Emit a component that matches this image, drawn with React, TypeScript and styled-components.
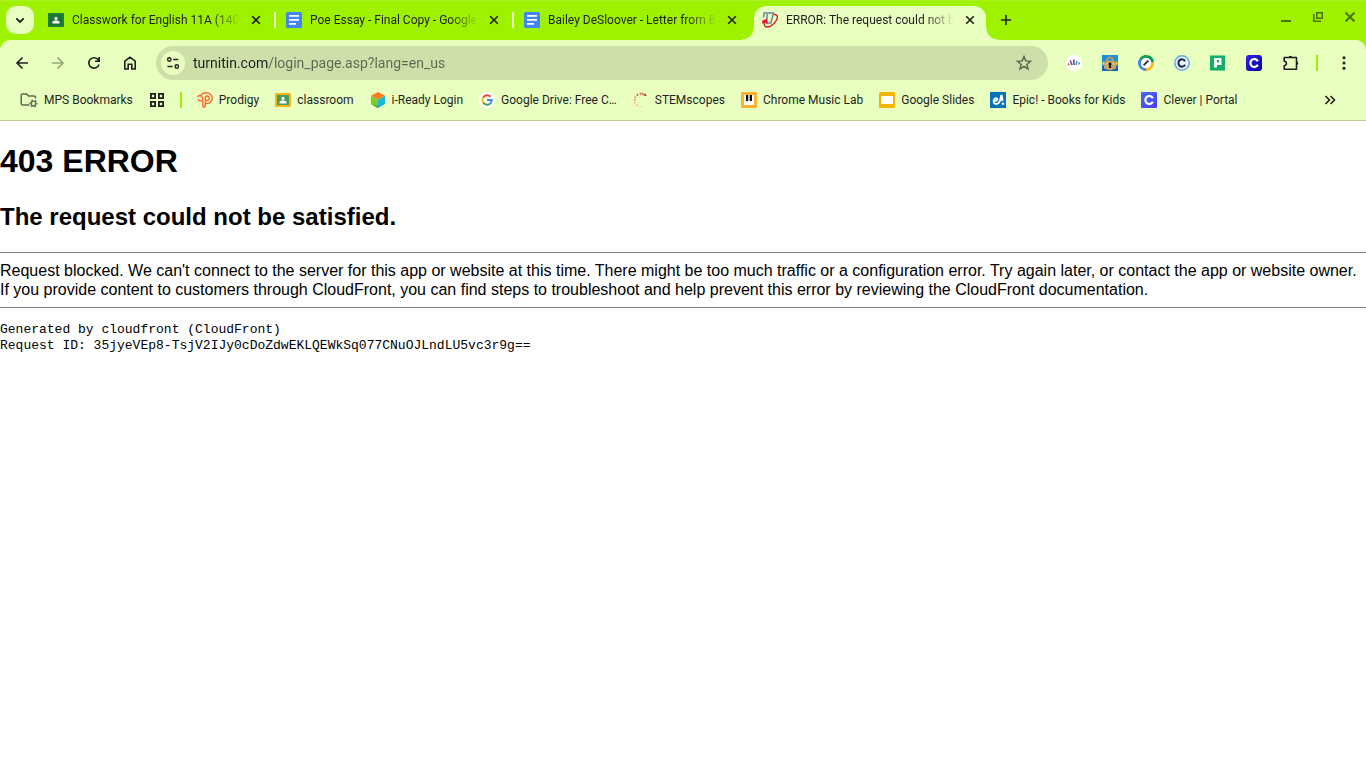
import React from "react";
import styled, { createGlobalStyle, css } from "styled-components";

const c = {
  frame: "#9ef200",
  toolbar: "#e8ffbf",
  field: "#cfdfaa",
  ink: "#1f1f1f",
  muted: "#5f6753",
  control: "#4c7500",
};

const GlobalStyle = createGlobalStyle`
  * { box-sizing: border-box; }
  body { margin: 0; background: #fff; color: #000; font-family: "Liberation Sans", Arial, sans-serif; }
  button, input { font: inherit; }
`;

const Chrome = styled.header`
  background: ${c.frame};
  font-family: Roboto, sans-serif;
  font-size: 12px;
  color: ${c.ink};
`;

const TabStrip = styled.div`
  display: flex;
  align-items: flex-start;
  height: 40px;
  padding: 6px 0 0 6px;
  box-shadow: inset 0 1px 0 #aaf228;
`;

const iconButton = css`
  display: grid;
  place-items: center;
  flex: none;
  padding: 0;
  border: 0;
  background: none;
  color: ${c.ink};
`;

const TabSearch = styled.button`
  ${iconButton}
  width: 28px;
  height: 28px;
  margin-right: 6px;
  border-radius: 10px;
  background: ${c.toolbar};
`;

const Tabs = styled.div`
  display: flex;
  flex: 0 1 946px;
  min-width: 0;
`;

const Tab = styled.div<{ $active?: boolean }>`
  position: relative;
  display: flex;
  align-items: center;
  flex: 0 1 232px;
  min-width: 0;
  height: ${(p) => (p.$active ? 34 : 28)}px;
  padding: ${(p) => (p.$active ? "0 8px 6px" : "0 8px")};
  border-radius: 12px 12px 0 0;
  background: ${(p) => (p.$active ? c.toolbar : "transparent")};
  ${(p) =>
    p.$active &&
    css`
      &::before,
      &::after {
        content: "";
        position: absolute;
        bottom: 0;
        width: 12px;
        height: 12px;
      }
      &::before {
        right: 100%;
        background: radial-gradient(circle at 0 0, transparent 11px, ${c.toolbar} 12px);
      }
      &::after {
        left: 100%;
        background: radial-gradient(circle at 100% 0, transparent 11px, ${c.toolbar} 12px);
      }
    `}
`;

const TabGap = styled.span<{ $line?: boolean }>`
  flex: none;
  width: 2px;
  height: 16px;
  margin: 6px 2px;
  border-radius: 1px;
  background: ${(p) => (p.$line ? c.toolbar : "transparent")};
`;

const TabTitle = styled.button`
  flex: 1;
  min-width: 0;
  height: 28px;
  margin: 0 8px;
  padding: 0;
  border: 0;
  background: none;
  color: ${c.ink};
  text-align: left;
  white-space: nowrap;
  overflow: hidden;
  mask-image: linear-gradient(to right, #000 calc(100% - 28px), transparent);
`;

const TabClose = styled.button`
  ${iconButton}
  width: 16px;
  height: 16px;
`;

const NewTab = styled.button`
  ${iconButton}
  width: 28px;
  height: 28px;
  margin-left: 6px;
`;

const WindowControls = styled.div`
  display: flex;
  margin-left: auto;
`;

const WindowButton = styled.button`
  ${iconButton}
  width: 32px;
  height: 22px;
  color: ${c.control};
`;

const Panel = styled.div`
  background: ${c.toolbar};
  border-radius: 10px 10px 0 0;
  border-bottom: 1px solid #b9cc99;
`;

const Toolbar = styled.div`
  display: flex;
  align-items: center;
  gap: 8px;
  padding: 6px 8px 0;
`;

const ToolButton = styled.button<{ $dim?: boolean }>`
  ${iconButton}
  width: 28px;
  height: 28px;
  opacity: ${(p) => (p.$dim ? 0.4 : 1)};
`;

const AddressBar = styled.form`
  display: flex;
  align-items: center;
  flex: 1;
  min-width: 0;
  height: 34px;
  margin: 0 4px;
  padding: 0 10px 0 5px;
  border-radius: 17px;
  background: ${c.field};
`;

const SiteInfo = styled.button`
  ${iconButton}
  width: 24px;
  height: 24px;
  border-radius: 50%;
  background: ${c.toolbar};
`;

const AddressInput = styled.input`
  flex: 1;
  min-width: 0;
  height: 34px;
  margin: 0 8px;
  padding: 0;
  border: 0;
  outline: 0;
  font-size: 14px;
  color: transparent;
  background: linear-gradient(to right, ${c.ink} 76px, ${c.muted} 76px);
  background-clip: text;
  -webkit-background-clip: text;
`;

const ToolDivider = styled.span`
  flex: none;
  width: 2px;
  height: 16px;
  margin: 0 4px;
  background: ${c.frame};
`;

const Bookmarks = styled.nav`
  display: flex;
  align-items: center;
  gap: 16px;
  height: 40px;
  padding: 0 28px 0 20px;
`;

const Bookmark = styled.a`
  display: flex;
  align-items: center;
  flex: none;
  gap: 6px;
  color: ${c.ink};
  text-decoration: none;
  white-space: nowrap;
`;

const BookmarkDivider = styled.span`
  flex: none;
  width: 2px;
  height: 16px;
  margin: 0 -1px;
  background: ${c.frame};
`;

const Overflow = styled.button`
  ${iconButton}
  width: 16px;
  height: 16px;
  margin-left: auto;
`;

const Svg = styled.svg`
  display: block;
  flex: none;
`;

const Page = styled.main`
  overflow: hidden;
`;

const Title = styled.h1`
  margin: 22px 0 23px;
  font-size: 32px;
  line-height: 37px;
`;

const Subtitle = styled.h2`
  margin: 0 0 21px;
  font-size: 24px;
  line-height: 28px;
`;

const Rule = styled.hr`
  height: 1px;
  margin: 0;
  border: 0;
  background: #808080;
`;

const Message = styled.p`
  margin: 8px 0;
  font-size: 16px;
  line-height: 19px;
`;

const Details = styled.pre`
  margin: 14px 0;
  font-family: "Liberation Mono", monospace;
  font-size: 13px;
  line-height: 16px;
`;

type IconProps = { size?: number; box?: number; children: React.ReactNode };

const Icon = ({ size = 16, box = 16, children }: IconProps) => (
  <Svg width={size} height={size} viewBox={`0 0 ${box} ${box}`} aria-hidden="true" fill="none">
    {children}
  </Svg>
);

const line = { stroke: "currentColor", strokeWidth: 1.6 };

const CloseIcon = () => (
  <Icon><path d="M4.2 4.2l7.6 7.6M11.8 4.2l-7.6 7.6" {...line} /></Icon>
);

const DocsIcon = () => (
  <Icon>
    <rect width="16" height="16" rx="1.5" fill="#4285f4" />
    <path d="M3 3.900h10M3 7.900h10M3 11.900h7" stroke="#fff" strokeWidth="1.800" />
  </Icon>
);

const ClassroomIcon = ({ frame, board }: { frame: string; board: string }) => (
  <Icon>
    <rect y="1" width="16" height="14" rx="1" fill={frame} />
    <rect x="2" y="3" width="12" height="10" fill={board} />
    <circle cx="8" cy="6.4" r="1.6" fill="#fff" />
    <path d="M4.500 11.500V10.200C4.500 9 6.500 8.500 8 8.500s3.500.5 3.500 1.700v1.300z" fill="#fff" />
  </Icon>
);

const TurnitinIcon = () => (
  <Icon>
    <path d="M1.500 5.500L2 1H11.500L8.800 11H4.500L5.200 2" stroke="#6488a0" strokeWidth="1.500" />
    <path d="M12 2.500C15.700 2.200 16.200 5 14.300 8.500C11.800 12.700 7 16 3.800 14.800C2 14 1.900 12 2.700 9.500" stroke="#e3182d" strokeWidth="1.400" />
    <path d="M0 8.800L4.800 6.800L5.800 12L3.200 10.800L0.500 11.800z" fill="#e3182d" />
  </Icon>
);

const tabs = [
  { title: "Classwork for English 11A (140", icon: <ClassroomIcon frame="#188038" board="#1e7536" /> },
  { title: "Poe Essay - Final Copy - Google", icon: <DocsIcon /> },
  { title: "Bailey DeSloover - Letter from B", icon: <DocsIcon /> },
  { title: "ERROR: The request could not b", icon: <TurnitinIcon />, active: true },
];

const FolderIcon = () => (
  <Icon size={18} box={18}>
    <path d="M9.500 14H2.800Q1.200 14 1.200 12.400V4.600Q1.200 3 2.800 3H6.500L8.500 5H14Q15.500 5 15.500 6.500V7.500" stroke="#5f6753" strokeWidth="1.500" />
    <circle cx="13.500" cy="12.500" r="2.400" stroke="#5f6753" strokeWidth="1.400" />
    <circle cx="13.500" cy="12.500" r="3.500" stroke="#5f6753" strokeWidth="1.300" strokeDasharray="1.500 2.165" strokeDashoffset=".7" />
  </Icon>
);

const GridIcon = () => (
  <Icon>
    <path d="M1.900 1.900h4.200v4.200H1.900zM9.900 1.900h4.200v4.200H9.900zM1.900 9.900h4.200v4.200H1.900zM9.900 9.900h4.200v4.200H9.900z" {...line} strokeWidth={1.800} />
  </Icon>
);

const ProdigyIcon = () => (
  <Icon>
    <path d="M.8 4.500C2.500 2.500 5.500 3.700 5.700 7V13.500Q5.700 15.200 7 15.200Q8.300 15.200 8.300 13.500V11.200C12 12.200 15.200 9.800 15.200 6.300C15.200 2.800 12.500.8 9.300.8C6.800.8 5.200 1.600 4.200 3M1.200 7.500C2 9.200 4 9.300 5.700 8.300M8.300 11V6.500C8.300 4.800 9 4 10.200 4C11.500 4 12.300 5 12.300 6.200C12.300 7.800 10.500 8.900 8.300 8.200" stroke="#f96a2f" strokeWidth="1.400" strokeLinecap="round" strokeLinejoin="round" />
  </Icon>
);

const IReadyIcon = () => (
  <Icon>
    <path d="M8 0L15 3.800L8 7.700L1 3.800z" fill="#ff7a1a" />
    <path d="M1 3.800L8 7.700V16L1 12z" fill="#7fc832" />
    <path d="M15 3.800L8 7.700V16L15 12z" fill="#16b9d0" />
    <path d="M1 12L8 16V14z" fill="#449d2b" />
  </Icon>
);

const GoogleIcon = () => (
  <Icon>
    <circle cx="8" cy="8" r="8" fill="#fff" />
    <path d="M4.300 5.300A4.700 4.700 0 0 1 11.400 4.700" stroke="#ea4335" strokeWidth="2" />
    <path d="M4.300 10.700A4.700 4.700 0 0 1 4.300 5.300" stroke="#fbbc04" strokeWidth="2" />
    <path d="M11 11.700A4.700 4.700 0 0 1 4.300 10.700" stroke="#34a853" strokeWidth="2" />
    <path d="M8 8H12.700Q12.700 10.400 11 11.700" stroke="#4285f4" strokeWidth="2" />
  </Icon>
);

const StemIcon = () => (
  <Icon>
    <path d="M9.300 14.300l.3 1M7 14l-.4 1" stroke="#fbc49c" strokeWidth="1.200" />
    <path d="M4.300 12.800l-.9 1M2.300 10.700l-1 .5" stroke="#f79a80" strokeWidth="1.500" />
    <path d="M1 7.800h1.500M1.600 4.900l1.200.6" stroke="#f06a68" strokeWidth="1.500" />
    <path d="M4 2.200l.8 1.200M7.500.8l.2 1.600M10.300 1.200l-.3 1.500" stroke="#dc3048" strokeWidth="1.800" />
    <path d="M12.300 1.200l1.500 3-3-.5z" fill="#c51f3c" />
  </Icon>
);

const MusicIcon = () => (
  <Icon>
    <rect width="16" height="16" rx="1" fill="#ffb02e" />
    <path d="M3 3h10v10H3z" fill="#fff" />
    <path d="M5 3h2.300v6H5zM8.700 3H11v6H8.700z" fill="#111" />
    <path d="M6.200 9v4M9.800 9v4" stroke="#ddd" strokeWidth=".6" />
  </Icon>
);

const SlidesIcon = () => (
  <Icon>
    <rect width="16" height="16" rx="1.500" fill="#f5b400" />
    <path d="M2 4h12v8H2z" fill="#fff" />
  </Icon>
);

const EpicIcon = () => (
  <Icon>
    <path d="M0 0h16v16H0z" fill="#0872bd" />
    <path d="M4 9C6.500 9 7.700 7.800 7.100 6.700C6 5.200 3.400 7 3.600 9.700C3.800 12.500 7 12.400 8.800 10.800C10 9.500 10.800 6 11.300 3" stroke="#fff" strokeWidth="1.900" />
    <path d="M11.400 3l1.100 6" stroke="#fff" strokeWidth="2" />
    <circle cx="12.900" cy="11.800" r="1.200" fill="#fff" />
  </Icon>
);

const CleverIcon = ({ dark }: { dark?: boolean }) => (
  <Icon>
    <defs>
      <linearGradient id={dark ? "cleverDark" : "cleverLight"} x1="0" y1="0" x2="1" y2="1">
        <stop stopColor={dark ? "#2b22f0" : "#4a6bf5"} />
        <stop offset="1" stopColor={dark ? "#0a0497" : "#4a3df0"} />
      </linearGradient>
    </defs>
    <rect width="16" height="16" rx={dark ? 3 : 1} fill={`url(#${dark ? "cleverDark" : "cleverLight"})`} />
    <path d="M11.800 6.300A3.900 4 0 1 0 11.800 9.700" stroke="#fff" strokeWidth="2.200" />
  </Icon>
);

const bookmarks = [
  { label: "Prodigy", icon: <ProdigyIcon /> },
  { label: "classroom", icon: <ClassroomIcon frame="#f3b814" board="#4a9a58" /> },
  { label: "i-Ready Login", icon: <IReadyIcon /> },
  { label: "Google Drive: Free C…", icon: <GoogleIcon /> },
  { label: "STEMscopes", icon: <StemIcon /> },
  { label: "Chrome Music Lab", icon: <MusicIcon /> },
  { label: "Google Slides", icon: <SlidesIcon /> },
  { label: "Epic! - Books for Kids", icon: <EpicIcon /> },
  { label: "Clever | Portal", icon: <CleverIcon /> },
];

const extensions = [
  {
    label: "Reading helper",
    icon: (
      <Icon>
        <circle cx="8" cy="8" r="8" fill="#fff" />
        <path d="M2 8.500l1.200 1.800" stroke="#ea4343" strokeWidth="1.400" />
        <path d="M4.200 5.500l1.800 4.500" stroke="#6a4c9c" strokeWidth="1.600" />
        <path d="M7.900 4.500v5.500" stroke="#7a4ea5" strokeWidth="1.700" />
        <path d="M10.800 5.800l-.6 4.200" stroke="#2f9c86" strokeWidth="1.400" />
        <path d="M13.500 7.200l-.8 2.300" stroke="#3a84c8" strokeWidth="1.300" />
      </Icon>
    ),
  },
  {
    label: "Lock",
    icon: (
      <Icon>
        <path d="M0 0h16v16H0z" fill="#1692dc" />
        <path d="M0 11h16v5H0z" fill="#1465b5" />
        <path d="M0 8l2-2v5zM16 8l-2-2v5z" fill="#f2c61e" />
        <path d="M5 7.500V5Q5 2.500 8 2.500t3 2.500v2.500" stroke="#ad9565" strokeWidth="1.800" />
        <path d="M2 7l2.500-1.500h7L14 7v6.500L8 15.500 2 13.500z" fill="#c2a46b" />
        <path d="M3.500 8h9v1.500h-9z" fill="#dec58c" />
        <path d="M8 7.500a1.600 1.600 0 0 1 .8 3L9.200 13H6.800l.4-2.500A1.600 1.600 0 0 1 8 7.500z" fill="#19150d" />
      </Icon>
    ),
  },
  {
    label: "Writing coach",
    icon: (
      <Icon>
        <circle cx="8" cy="8" r="5.500" fill="#fff" />
        <path d="M1.500 9.500A6.600 6.600 0 0 1 3.600 3.200" stroke="#4285f4" strokeWidth="2.800" />
        <path d="M2.800 4A6.600 6.600 0 0 1 14.600 7.500" stroke="#149e54" strokeWidth="2.800" />
        <path d="M14.600 7.500A6.600 6.600 0 0 1 7.500 14.600" stroke="#fbb917" strokeWidth="2.800" />
        <path d="M8 14.600A6.600 6.600 0 0 1 1.500 9" stroke="#4285f4" strokeWidth="2.800" />
        <path d="M5.600 10.400L10.400 5.600" stroke="#333" strokeWidth="2" />
      </Icon>
    ),
  },
  {
    label: "Citation",
    icon: (
      <Icon>
        <circle cx="8" cy="8" r="7.200" fill="#e9f3ff" stroke="#64a8f2" strokeWidth="1.500" />
        <path d="M11 6.300A3.500 3.700 0 1 0 11 9.700" stroke="#202445" strokeWidth="2" />
      </Icon>
    ),
  },
  {
    label: "Classroom tool",
    icon: (
      <Icon>
        <path d="M0 .5h15v15H0z" fill="#12ad68" />
        <path d="M4 3h7.500v7H7v2.500H4z" fill="#fff" />
        <path d="M7 5h2v2.500H7z" fill="#12ad68" />
      </Icon>
    ),
  },
  { label: "Clever", icon: <CleverIcon dark /> },
  {
    label: "Extensions",
    icon: (
      <Icon size={20} box={20}>
        <path d="M4.200 4.500H16.500V8.700V16.200H4.200V12.600A2.200 2.200 0 0 0 4.200 8.200z" {...line} strokeLinejoin="round" />
        <path d="M8.600 4.500a1.800 1.800 0 0 1 3.600 0zM16.500 8.500a1.800 1.800 0 0 1 0 3.600z" fill="currentColor" />
      </Icon>
    ),
  },
];

export default function App() {
  return (
    <>
      <GlobalStyle />
      <Chrome>
        <TabStrip>
          <TabSearch aria-label="Search tabs">
            <Icon><path d="M4.300 6.300L8 10l3.700-3.700" {...line} strokeWidth={1.800} /></Icon>
          </TabSearch>
          <Tabs>
            {tabs.map((tab, i) => (
              <React.Fragment key={tab.title}>
                {i > 0 && <TabGap $line={!tab.active} />}
                <Tab $active={tab.active}>
                  {tab.icon}
                  <TabTitle>{tab.title}</TabTitle>
                  <TabClose aria-label="Close tab"><CloseIcon /></TabClose>
                </Tab>
              </React.Fragment>
            ))}
          </Tabs>
          <NewTab aria-label="New tab">
            <Icon><path d="M8 3v10M3 8h10" {...line} /></Icon>
          </NewTab>
          <WindowControls>
            <WindowButton aria-label="Minimize">
              <Icon><path d="M3 12h10" {...line} strokeWidth={2} /></Icon>
            </WindowButton>
            <WindowButton aria-label="Restore">
              <Icon><path d="M6.800 3.800h5.400v5.400H6.800z" {...line} /><path d="M3.800 5v7.200H11" {...line} /></Icon>
            </WindowButton>
            <WindowButton aria-label="Close window">
              <Icon><path d="M3.500 3.500l9 9M12.500 3.500l-9 9" {...line} strokeWidth={2} /></Icon>
            </WindowButton>
          </WindowControls>
        </TabStrip>
        <Panel>
          <Toolbar>
            <ToolButton aria-label="Back">
              <Icon size={20} box={20}><path d="M16 10H5M10.500 4.500L5 10l5.500 5.500" {...line} /></Icon>
            </ToolButton>
            <ToolButton aria-label="Forward" $dim>
              <Icon size={20} box={20}><path d="M4 10h11M9.500 4.500L15 10l-5.500 5.500" {...line} /></Icon>
            </ToolButton>
            <ToolButton aria-label="Reload">
              <Icon size={20} box={20}><path d="M15 11.500A5.200 5.200 0 1 1 13.800 6.300L15 7.700M15.200 4v4.200H11" {...line} /></Icon>
            </ToolButton>
            <ToolButton aria-label="Home">
              <Icon size={20} box={20}><path d="M4.800 8.200L10 4.200l5.200 4V16h-3.400v-4.800H8.200V16H4.800z" {...line} /></Icon>
            </ToolButton>
            <AddressBar onSubmit={(e) => e.preventDefault()}>
              <SiteInfo type="button" aria-label="View site information">
                <Icon>
                  <path d="M8.200 4.500h5M2.500 11.500h5" {...line} />
                  <circle cx="4.300" cy="4.500" r="1.700" {...line} strokeWidth={1.400} />
                  <circle cx="11.800" cy="11.500" r="1.700" {...line} strokeWidth={1.400} />
                </Icon>
              </SiteInfo>
              <AddressInput aria-label="Address" defaultValue="turnitin.com/login_page.asp?lang=en_us" />
              <ToolButton type="button" aria-label="Bookmark this tab">
                <Icon size={18} box={18}>
                  <path d="M9 2.600l1.800 4.300 4.700.4-3.600 3.100 1.100 4.600L9 12.500 5 15l1.100-4.600-3.600-3.100 4.700-.4z" stroke={c.muted} strokeWidth="1.500" />
                </Icon>
              </ToolButton>
            </AddressBar>
            {extensions.map((ext) => (
              <ToolButton key={ext.label} aria-label={ext.label}>{ext.icon}</ToolButton>
            ))}
            <ToolDivider />
            <ToolButton aria-label="Menu">
              <Icon>
                <circle cx="8" cy="2.800" r="1.500" fill="currentColor" />
                <circle cx="8" cy="8" r="1.500" fill="currentColor" />
                <circle cx="8" cy="13.200" r="1.500" fill="currentColor" />
              </Icon>
            </ToolButton>
          </Toolbar>
          <Bookmarks aria-label="Bookmarks">
            <Bookmark href="#"><FolderIcon />MPS Bookmarks</Bookmark>
            <Bookmark href="#" aria-label="Apps"><GridIcon /></Bookmark>
            <BookmarkDivider />
            {bookmarks.map((b) => (
              <Bookmark href="#" key={b.label}>{b.icon}{b.label}</Bookmark>
            ))}
            <Overflow aria-label="More bookmarks">
              <Icon><path d="M3.500 4l4 4-4 4M8.500 4l4 4-4 4" {...line} /></Icon>
            </Overflow>
          </Bookmarks>
        </Panel>
      </Chrome>
      <Page>
        <Title>403 ERROR</Title>
        <Subtitle>The request could not be satisfied.</Subtitle>
        <Rule />
        <Message>
          Request blocked. We can't connect to the server for this app or website at this time. There might be too much
          traffic or a configuration error. Try again later, or contact the app or website owner.
          <br />
          If you provide content to customers through CloudFront, you can find steps to troubleshoot and help prevent
          this error by reviewing the CloudFront documentation.
        </Message>
        <Rule />
        <Details>{`Generated by cloudfront (CloudFront)
Request ID: 35jyeVEp8-TsjV2IJy0cDoZdwEKLQEWkSq077CNuOJLndLU5vc3r9g==`}</Details>
      </Page>
    </>
  );
}
